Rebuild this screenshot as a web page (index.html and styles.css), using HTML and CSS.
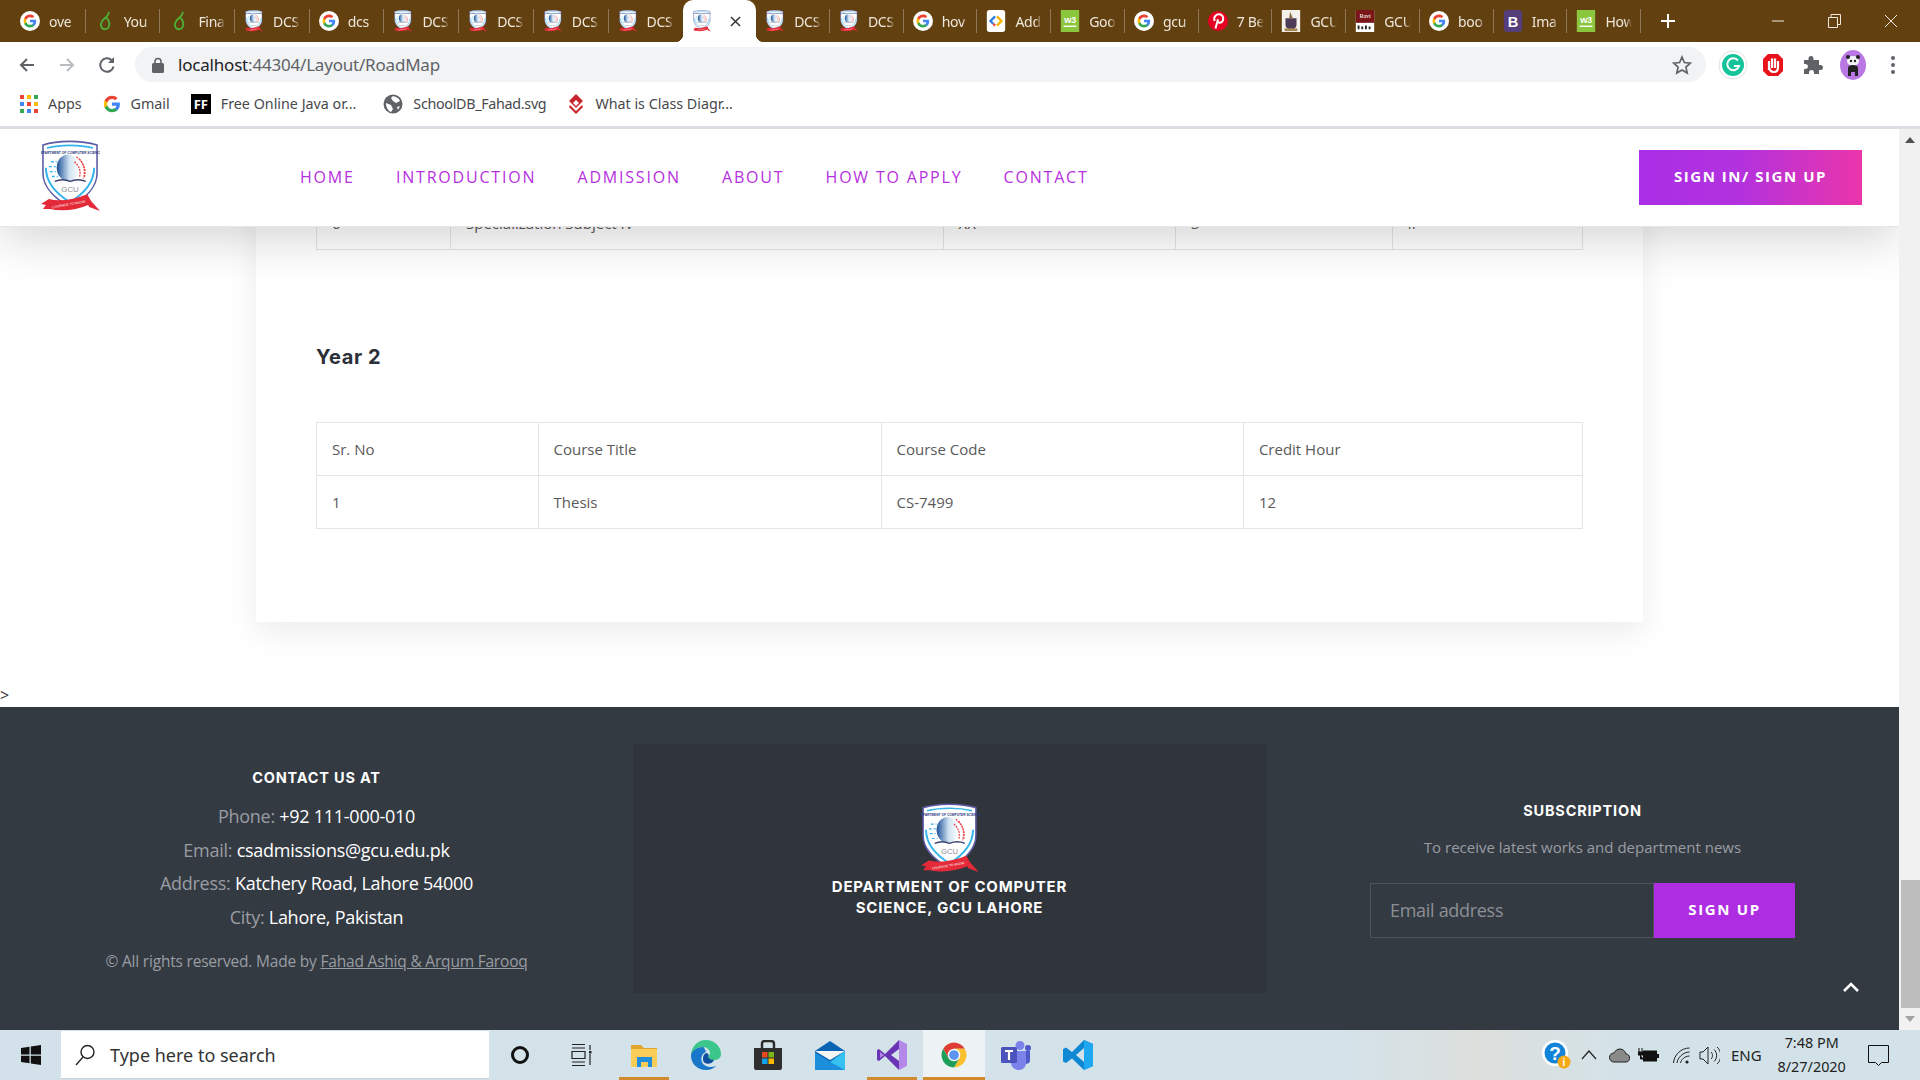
FILE: index.html
```html
<!DOCTYPE html>
<html lang="en">
<head>
    <meta charset="UTF-8">
    <title>RoadMap</title>
    <link rel="stylesheet" href="styles.css">
</head>
<body>
    <svg class="defs" width="0" height="0">
        <defs>
            <linearGradient id="globe" x1="0" x2="1" y1="0" y2="0">
                <stop offset="0" stop-color="#1c4f96"/>
                <stop offset="0.55" stop-color="#cfe3f2"/>
                <stop offset="1" stop-color="#ffffff"/>
            </linearGradient>
            <symbol id="google" viewBox="0 0 24 24">
                <circle cx="12" cy="12" r="12" fill="#fff"/>
                <g transform="translate(3.6 3.6) scale(.7)">
                    <path fill="#4285F4" d="M22.56 12.25c0-.78-.07-1.53-.2-2.25H12v4.26h5.92c-.26 1.37-1.04 2.53-2.21 3.31v2.77h3.57c2.08-1.92 3.28-4.74 3.28-8.09z"/>
                    <path fill="#34A853" d="M12 23c2.97 0 5.46-.98 7.28-2.66l-3.57-2.77c-.98.66-2.23 1.06-3.71 1.06-2.86 0-5.29-1.93-6.16-4.53H2.18v2.84C3.99 20.53 7.7 23 12 23z"/>
                    <path fill="#FBBC05" d="M5.84 14.09c-.22-.66-.35-1.36-.35-2.09s.13-1.43.35-2.09V7.07H2.18C1.43 8.55 1 10.22 1 12s.43 3.45 1.18 4.93l3.66-2.84z"/>
                    <path fill="#EA4335" d="M12 5.38c1.62 0 3.06.56 4.21 1.64l3.15-3.15C17.45 2.09 14.97 1 12 1 7.7 1 3.99 3.47 2.18 7.07l3.66 2.84c.87-2.6 3.3-4.53 6.16-4.53z"/>
                </g>
            </symbol>
            <symbol id="gmark" viewBox="0 0 24 24">
                <path fill="#4285F4" d="M22.56 12.25c0-.78-.07-1.53-.2-2.25H12v4.26h5.92c-.26 1.37-1.04 2.53-2.21 3.31v2.77h3.57c2.08-1.92 3.28-4.74 3.28-8.09z"/>
                <path fill="#34A853" d="M12 23c2.97 0 5.46-.98 7.28-2.66l-3.57-2.77c-.98.66-2.23 1.06-3.71 1.06-2.86 0-5.29-1.93-6.16-4.53H2.18v2.84C3.99 20.53 7.7 23 12 23z"/>
                <path fill="#FBBC05" d="M5.84 14.09c-.22-.66-.35-1.36-.35-2.09s.13-1.43.35-2.09V7.07H2.18C1.43 8.55 1 10.22 1 12s.43 3.45 1.18 4.93l3.66-2.84z"/>
                <path fill="#EA4335" d="M12 5.38c1.62 0 3.06.56 4.21 1.64l3.15-3.15C17.45 2.09 14.97 1 12 1 7.7 1 3.99 3.47 2.18 7.07l3.66 2.84c.87-2.6 3.3-4.53 6.16-4.53z"/>
            </symbol>
            <symbol id="leaf" viewBox="0 0 20 24">
                <path fill="none" stroke="#4caf38" stroke-width="2" d="M14 2C15 6 10 8 7 12c-3 4-1 9 3 9s6-5 4-9c-1-3-3-4-4-3"/>
            </symbol>
            <symbol id="crest" viewBox="0 0 60 74">
                <path fill="#fff" stroke="#5c5ca6" stroke-width="1.6" d="M2 5C17 0 41 0 57 5V34C57 48 44 60 29.5 68 15 60 2 48 2 34Z"/>
                <path fill="none" stroke="#35b4ec" stroke-width="1.6" d="M6 8C20 4.500 39 4.500 53 8"/>
                <path fill="none" stroke="#35b4ec" stroke-width="2" d="M5 28C5 44 18 56 29.5 63 41 56 54 44 54 28"/>
                <text x="29.5" y="14" text-anchor="middle" font-family="Liberation Sans" font-size="3.4" font-weight="700" fill="#2b3a80">DEPARTMENT OF COMPUTER SCIENCE</text>
                <ellipse cx="27.5" cy="28" rx="11.5" ry="13.5" fill="url(#globe)"/>
                <path fill="none" stroke="#ee3f45" stroke-width="1.3" stroke-dasharray="2 1" d="M36 17c7 5 10 13 7 22M39 19c5 6 7 12 5 19M34 22c5 4 7 10 5 16"/>
                <path fill="none" stroke="#35b4ec" stroke-width="1.3" stroke-dasharray="3 2" d="M10 22h6M8 27h7M9 32h6M11 37h6"/>
                <path fill="none" stroke="#3a4470" stroke-width="1.5" d="M14 42c5-2 11-2 15.5 0 5-2 11-2 16 0"/>
                <text x="29.5" y="53" text-anchor="middle" font-family="Liberation Sans" font-size="8" fill="#8d8d93">GCU</text>
                <path fill="#e42a38" d="M0 65L8 60C20 63 34 60 47 55L51 62 60 72 49 68 48 66C36 71 22 73 9 70L2 70 5 66Z"/>
                <text x="28" y="66.5" text-anchor="middle" transform="rotate(-10 28 65)" font-family="Liberation Sans" font-size="3.4" fill="#fff">COURAGE TO KNOW</text>
            </symbol>
            <symbol id="w3" viewBox="0 0 20 24">
                <rect width="20" height="24" fill="#8cc63f"/>
                <text x="10" y="14" text-anchor="middle" font-family="Liberation Sans" font-size="10" font-weight="700" fill="#fff">w3</text>
                <rect x="3" y="17" width="14" height="1.5" fill="#fff"/>
            </symbol>
        </defs>
    </svg>

    <div class="tabstrip">
        <div class="tabs">
            <div class="tab"><svg class="fav"><use href="#google"/></svg><span class="tab-label">ove</span></div>
            <div class="tab"><svg class="fav"><use href="#leaf"/></svg><span class="tab-label">You</span></div>
            <div class="tab"><svg class="fav"><use href="#leaf"/></svg><span class="tab-label">Fina</span></div>
            <div class="tab"><svg class="fav"><use href="#crest"/></svg><span class="tab-label">DCS</span></div>
            <div class="tab"><svg class="fav"><use href="#google"/></svg><span class="tab-label">dcs</span></div>
            <div class="tab"><svg class="fav"><use href="#crest"/></svg><span class="tab-label">DCS</span></div>
            <div class="tab"><svg class="fav"><use href="#crest"/></svg><span class="tab-label">DCS</span></div>
            <div class="tab"><svg class="fav"><use href="#crest"/></svg><span class="tab-label">DCS</span></div>
            <div class="tab tab-prev"><svg class="fav"><use href="#crest"/></svg><span class="tab-label">DCS</span></div>
            <div class="tab tab-active"><svg class="fav"><use href="#crest"/></svg>
                <svg class="tab-close" viewBox="0 0 12 12"><path d="M1 1l10 10M11 1L1 11" stroke="#333" stroke-width="1.6"/></svg>
            </div>
            <div class="tab"><svg class="fav"><use href="#crest"/></svg><span class="tab-label">DCS</span></div>
            <div class="tab"><svg class="fav"><use href="#crest"/></svg><span class="tab-label">DCS</span></div>
            <div class="tab"><svg class="fav"><use href="#google"/></svg><span class="tab-label">hov</span></div>
            <div class="tab"><svg class="fav" viewBox="0 0 20 24">
                <rect width="20" height="24" rx="3" fill="#fff"/>
                <path d="M9 7l-5 5 3 3" fill="none" stroke="#2a7de1" stroke-width="2.5"/>
                <path d="M11 7l5 5-5 5" fill="none" stroke="#f5b400" stroke-width="2.5"/>
                <path d="M7 15l2 2" stroke="#e8453c" stroke-width="2.5"/>
            </svg><span class="tab-label">Add</span></div>
            <div class="tab"><svg class="fav"><use href="#w3"/></svg><span class="tab-label">Goo</span></div>
            <div class="tab"><svg class="fav"><use href="#google"/></svg><span class="tab-label">gcu</span></div>
            <div class="tab"><svg class="fav" viewBox="0 0 24 24">
                <circle cx="12" cy="12" r="12" fill="#e60023"/>
                <path d="M9 21l3-11M8 12C6 7 10 4 13 4c4 0 6 3 5 7-1 3-4 4-6 2" fill="none" stroke="#fff" stroke-width="2.4"/>
            </svg><span class="tab-label">7 Be</span></div>
            <div class="tab"><svg class="fav" viewBox="0 0 20 24">
                <rect width="20" height="24" fill="#f4f1ea"/>
                <path d="M4 9h12v7c0 3-3 5-6 6-3-1-6-3-6-6z" fill="#4d3b58"/>
                <path d="M9 2l3 7H8z" fill="#8a6b3a"/>
                <rect x="3" y="20" width="14" height="3" fill="#a5884f"/>
            </svg><span class="tab-label">GCU</span></div>
            <div class="tab"><svg class="fav" viewBox="0 0 20 24">
                <rect width="20" height="24" fill="#fff"/>
                <rect width="20" height="14" fill="#7a1518"/>
                <text x="10" y="9" text-anchor="middle" font-family="Liberation Serif" font-size="7" fill="#fff">Ravi</text>
                <path d="M3 21v-4M7 21v-3M11 21v-4M15 21v-3" stroke="#222" stroke-width="2"/>
            </svg><span class="tab-label">GCU</span></div>
            <div class="tab"><svg class="fav"><use href="#google"/></svg><span class="tab-label">boo</span></div>
            <div class="tab"><svg class="fav" viewBox="0 0 20 24">
                <rect width="20" height="24" rx="4" fill="#563d7c"/>
                <text x="10" y="18" text-anchor="middle" font-family="Liberation Sans" font-size="16" font-weight="700" fill="#fff">B</text>
            </svg><span class="tab-label">Ima</span></div>
            <div class="tab"><svg class="fav"><use href="#w3"/></svg><span class="tab-label">How</span></div>
        </div>
        <svg class="new-tab" viewBox="0 0 14 14"><path d="M7 0v14M0 7h14" stroke="#fff" stroke-width="2"/></svg>
        <div class="win-controls">
            <div class="win-btn"><svg width="12" height="12"><path d="M0 6h12" stroke="#f0e8dc"/></svg></div>
            <div class="win-btn"><svg width="13" height="14"><path d="M.5 3.5h9v10h-9zM3 3.5v-3h9.5v10h-3" fill="none" stroke="#f0e8dc"/></svg></div>
            <div class="win-btn win-close"><svg width="14" height="14"><path d="M1 1l12 12M13 1L1 13" stroke="#f0e8dc"/></svg></div>
        </div>
    </div>

    <div class="toolbar">
        <div class="tool-btn"><svg width="18" height="18" viewBox="0 0 18 18"><path d="M16 9H3M9 3L3 9l6 6" fill="none" stroke="#5f6368" stroke-width="2"/></svg></div>
        <div class="tool-btn"><svg width="18" height="18" viewBox="0 0 18 18"><path d="M2 9h13M9 3l6 6-6 6" fill="none" stroke="#b9bcc0" stroke-width="2"/></svg></div>
        <div class="tool-btn"><svg width="18" height="18" viewBox="0 0 18 18"><path d="M15.5 10.5A6.7 6.7 0 1 1 13.7 4.3" fill="none" stroke="#5f6368" stroke-width="2"/><path d="M16 1v6h-6z" fill="#5f6368"/></svg></div>
        <div class="address">
            <svg class="lock" width="12" height="16" viewBox="0 0 12 16"><path d="M3 7V4.500a3 3 0 0 1 6 0V7" fill="none" stroke="#5f6368" stroke-width="1.6"/><rect y="6" width="12" height="10" rx="1.5" fill="#5f6368"/></svg>
            <span class="url"><span class="url-host">localhost</span>:44304/Layout/RoadMap</span>
            <svg class="star" width="20" height="20" viewBox="0 0 20 20"><path d="M10 2l2.400 5.500 6 .6-4.500 4 1.300 5.900L10 15l-5.200 3 1.300-5.900-4.500-4 6-.6z" fill="none" stroke="#5f6368" stroke-width="1.7"/></svg>
        </div>
        <div class="tool-btn"><svg width="30" height="30" viewBox="0 0 30 30">
            <circle cx="15" cy="15" r="14" fill="#fff" stroke="#e3e3e3"/>
            <circle cx="15" cy="15" r="11" fill="#15c39a"/>
            <path d="M20 10.500a6 6 0 1 0 1 5.500h-5" fill="none" stroke="#fff" stroke-width="2"/>
        </svg></div>
        <div class="tool-btn"><svg width="22" height="24" viewBox="0 0 22 24">
            <path d="M6 1h10l5 5v12l-5 5H6l-5-5V6z" fill="#e8141c"/>
            <path d="M7 17V8M10 15V5.500M13 15V5.500M16 15V8M7 13c0 4 2 6 5 6s4-2 4-5" fill="none" stroke="#fff" stroke-width="2.2"/>
        </svg></div>
        <div class="tool-btn"><svg width="20" height="20" viewBox="0 0 20 20"><path d="M8 1a2.500 2.500 0 0 1 2.500 2.500V5H16v5h1.500a2.500 2.500 0 0 1 0 5H16v4h-5v-1.500a2.500 2.500 0 0 0-5 0V19H1v-5h1.500a2.500 2.500 0 0 0 0-5H1V5h4.500V3.500A2.500 2.500 0 0 1 8 1z" fill="#5f6368"/></svg></div>
        <div class="tool-btn"><svg width="28" height="30" viewBox="0 0 28 30">
            <ellipse cx="14" cy="15" rx="13" ry="15" fill="#b977e4"/>
            <ellipse cx="14" cy="11" rx="6" ry="5" fill="#f3f3f3"/>
            <circle cx="9" cy="7" r="2" fill="#222"/><circle cx="19" cy="7" r="2" fill="#222"/>
            <circle cx="12" cy="11" r="1.2" fill="#222"/><circle cx="16" cy="11" r="1.2" fill="#222"/>
            <path d="M9 26v-8c0-2 2-3 5-3s5 1 5 3v8h-3v-4h-4v4z" fill="#222"/>
        </svg></div>
        <div class="tool-btn"><svg width="4" height="18" viewBox="0 0 4 18"><circle cx="2" cy="2" r="2" fill="#5f6368"/><circle cx="2" cy="9" r="2" fill="#5f6368"/><circle cx="2" cy="16" r="2" fill="#5f6368"/></svg></div>
    </div>

    <div class="bookmarks">
        <div class="bookmark"><svg width="18" height="18" viewBox="0 0 18 18">
            <rect width="4" height="4" fill="#ea4335"/><rect x="7" width="4" height="4" fill="#fbbc05"/><rect x="14" width="4" height="4" fill="#34a853"/>
            <rect y="7" width="4" height="4" fill="#4285f4"/><rect x="7" y="7" width="4" height="4" fill="#ea4335"/><rect x="14" y="7" width="4" height="4" fill="#fbbc05"/>
            <rect y="14" width="4" height="4" fill="#34a853"/><rect x="7" y="14" width="4" height="4" fill="#4285f4"/><rect x="14" y="14" width="4" height="4" fill="#ea4335"/>
        </svg>Apps</div>
        <div class="bookmark"><svg width="18" height="18"><use href="#gmark"/></svg>Gmail</div>
        <div class="bookmark"><span class="ff-icon">FF</span>Free Online Java or...</div>
        <div class="bookmark bookmark-file"><svg width="20" height="20" viewBox="0 0 20 20">
            <circle cx="10" cy="10" r="9.5" fill="#5f6368"/>
            <path d="M10 2c3 1 6 2 7 5l-4 2-3-2-2-3zM3 9l5 2 2 4-2 3c-3-1-5-5-5-9zM14 13l3-1-2 4z" fill="#fff"/>
        </svg>SchoolDB_Fahad.svg</div>
        <div class="bookmark"><svg width="18" height="20" viewBox="0 0 18 20">
            <path d="M9 0l7 7-7 7-7-7z" fill="#c8262c"/><path d="M9 6l3 3-3 3-3-3z" fill="#fff"/><path d="M3 11l6 6 6-6 1 2-7 7-7-7z" fill="#c8262c"/>
        </svg>What is Class Diagr...</div>
    </div>

    <div class="viewport">
        <div class="page">
            <header class="site-nav">
                <svg class="nav-logo"><use href="#crest"/></svg>
                <nav class="menu">
                    <a>HOME</a>
                    <a>INTRODUCTION</a>
                    <a>ADMISSION</a>
                    <a>ABOUT</a>
                    <a>HOW TO APPLY</a>
                    <a>CONTACT</a>
                </nav>
                <a class="btn-sign">SIGN IN/ SIGN UP</a>
            </header>

            <main class="main">
                <div class="card">
                    <table class="course-table">
                        <colgroup>
                            <col class="c-a1"><col class="c-a2"><col class="c-a3"><col class="c-a4"><col>
                        </colgroup>
                        <tr><td>6</td><td>Specialization Subject IV</td><td>XX</td><td>3</td><td>II</td></tr>
                    </table>
                    <h3 class="year-title">Year 2</h3>
                    <table class="course-table">
                        <colgroup>
                            <col class="c-b1"><col class="c-b2"><col class="c-b3"><col>
                        </colgroup>
                        <tr><td>Sr. No</td><td>Course Title</td><td>Course Code</td><td>Credit Hour</td></tr>
                        <tr><td>1</td><td>Thesis</td><td>CS-7499</td><td>12</td></tr>
                    </table>
                </div>
                <div class="stray">&gt;</div>
            </main>

            <footer class="footer">
                <div class="f-col f-contact">
                    <h5 class="f-title">CONTACT US AT</h5>
                    <p class="f-line">Phone: <span>+92 111-000-010</span></p>
                    <p class="f-line">Email: <span>csadmissions@gcu.edu.pk</span></p>
                    <p class="f-line">Address: <span>Katchery Road, Lahore 54000</span></p>
                    <p class="f-line">City: <span>Lahore, Pakistan</span></p>
                    <p class="f-copy">© All rights reserved. Made by <a>Fahad Ashiq &amp; Arqum Farooq</a></p>
                </div>
                <div class="f-col f-brand">
                    <svg class="f-logo"><use href="#crest"/></svg>
                    <h5 class="f-brand-name">DEPARTMENT OF COMPUTER<br>SCIENCE, GCU LAHORE</h5>
                </div>
                <div class="f-col f-sub">
                    <h5 class="f-title">SUBSCRIPTION</h5>
                    <p class="f-note">To receive latest works and department news</p>
                    <div class="sub-form">
                        <div class="sub-input">Email address</div>
                        <div class="sub-btn">SIGN UP</div>
                    </div>
                </div>
                <svg class="to-top" width="18" height="11" viewBox="0 0 18 11"><path d="M2 9l7-7 7 7" fill="none" stroke="#fff" stroke-width="2.6"/></svg>
            </footer>
        </div>
        <div class="scrollbar">
            <svg class="sb-arrow" width="10" height="6" viewBox="0 0 10 6"><path d="M5 0l5 6H0z" fill="#505050"/></svg>
            <div class="sb-track"><div class="sb-thumb"></div></div>
            <svg class="sb-arrow" width="10" height="6" viewBox="0 0 10 6"><path d="M0 0h10L5 6z" fill="#a3a3a3"/></svg>
        </div>
    </div>

    <div class="taskbar">
        <div class="start"><svg width="20" height="20" viewBox="0 0 20 20"><path d="M0 3l8.500-1.300v7.800H0zM9.800 1.500L20 0v9.500H9.800zM0 10.800h8.500v7.500L0 17zM9.800 10.800H20V20L9.800 18.500z" fill="#111"/></svg></div>
        <div class="search">
            <svg width="20" height="22" viewBox="0 0 20 22"><circle cx="12.5" cy="8" r="6.5" fill="none" stroke="#222" stroke-width="1.4"/><path d="M8 13l-7 8" stroke="#222" stroke-width="1.4"/></svg>
            <span>Type here to search</span>
        </div>
        <div class="task-item"><svg width="20" height="20"><circle cx="10" cy="10" r="7.5" fill="none" stroke="#111" stroke-width="3"/></svg></div>
        <div class="task-item"><svg width="22" height="22" viewBox="0 0 22 22"><path d="M1 .5h13M1 4h13M1 7.500h13v7H1zM1 18h13M1 21.500h13M19 1v5M19 10v11" fill="none" stroke="#222" stroke-width="1.2"/><rect x="18" y="7" width="2.5" height="2.5" fill="#222"/></svg></div>
        <div class="task-item task-running"><svg width="30" height="30" viewBox="0 0 30 30">
            <path d="M2 5h10l3 3h13v4H2z" fill="#e2a52c"/>
            <path d="M2 9h26v18H2z" fill="#f9cd58"/>
            <path d="M8 17h15v10H8z" fill="#1f8fdc"/><path d="M12 22h7v5h-7z" fill="#f9cd58"/>
        </svg></div>
        <div class="task-item"><svg width="30" height="30" viewBox="0 0 30 30">
            <path d="M15 0c8 0 15 6 15 14 0 4-3 6-7 6-3 0-6-1-6-3 0-1 2-2 2-4 0-3-3-6-7-6C6 7 1 11 0 16 0 7 6 0 15 0z" fill="#3bc68c"/>
            <path d="M12 7c-6 0-12 4-12 9 0 8 7 14 15 14 5 0 8-2 10-4-5 2-12 1-14-4s1-9 4-10c-1-3-2-5-3-5z" fill="#1976c8"/>
            <path d="M12 18c0-3 2-5 4-5 2 1 2 3 1 4 1 2 4 3 6 3-1 3-6 5-9 3-2-1-2-3-2-5z" fill="#0f4f9e"/>
        </svg></div>
        <div class="task-item"><svg width="30" height="30" viewBox="0 0 30 30">
            <path d="M9 8V4c0-2 1-3 3-3h6c2 0 3 1 3 3v4" fill="none" stroke="#2b2b2b" stroke-width="2.4"/>
            <path d="M1 8h28v20a2 2 0 0 1-2 2H3a2 2 0 0 1-2-2z" fill="#2f2f2f"/>
            <rect x="9" y="12" width="5.5" height="5.5" fill="#e8491d"/><rect x="15.5" y="12" width="5.5" height="5.5" fill="#7cb518"/>
            <rect x="9" y="18.5" width="5.5" height="5.5" fill="#0ca3e8"/><rect x="15.5" y="18.5" width="5.5" height="5.5" fill="#fdb900"/>
        </svg></div>
        <div class="task-item"><svg width="30" height="30" viewBox="0 0 30 30">
            <path d="M15 1L0 11v19h30V11z" fill="#0a64b4"/>
            <path d="M0 11h30L15 20z" fill="#f5f5f5"/>
            <path d="M30 11v19H0L0 13l15 9z" fill="#35c2f2"/>
            <path d="M0 13v17h30L15 22z" fill="#1c8fdc"/>
        </svg></div>
        <div class="task-item task-running"><svg width="30" height="30" viewBox="0 0 30 30">
            <path d="M22 0l8 4v22l-8 4z" fill="#b388e8"/>
            <path d="M22 0L8 14 2 9 0 10v10l2 1 6-5 14 14V21l-8-6 8-6z" fill="#6a35b5"/>
            <path d="M3 12l4 3-4 3z" fill="#b388e8"/>
        </svg></div>
        <div class="task-item task-active"><svg width="30" height="30" viewBox="0 0 24 24">
            <path fill="#dd3d33" d="M3.34 7A10 10 0 0 1 20.66 7H12L7.67 14.5Z"/>
            <path fill="#fbc02d" d="M20.66 7A10 10 0 0 1 12 22L16.33 14.5 12 7Z"/>
            <path fill="#1e9e58" d="M12 22A10 10 0 0 1 3.34 7L7.67 14.5H16.33Z"/>
            <circle cx="12" cy="12" r="5" fill="#fff"/><circle cx="12" cy="12" r="3.9" fill="#5c94f0"/>
        </svg></div>
        <div class="task-item"><svg width="30" height="30" viewBox="0 0 30 30">
            <circle cx="19" cy="5.5" r="4.5" fill="#7b83eb"/><circle cx="27" cy="8" r="3" fill="#5059c9"/>
            <path d="M23 11h6v9c0 3-2 4-6 4z" fill="#5059c9"/>
            <path d="M10 11h15v12c0 4-3 7-7 7s-8-3-8-7z" fill="#7b83eb"/>
            <rect y="7" width="16" height="16" rx="1.5" fill="#4b53bc"/>
            <path d="M4 11h8M8 11v9" stroke="#fff" stroke-width="2.2"/>
        </svg></div>
        <div class="task-item"><svg width="30" height="30" viewBox="0 0 30 30">
            <path d="M21 0l9 4v22l-9 4-12-11.500-6 4.500-3-1.500V9l3-1.500 6 4.500z" fill="#0f88d3"/>
            <path d="M21 8l-8 7 8 7z" fill="#d3e2ea"/>
            <path d="M21 0l9 4v22l-9 4z" fill="#1fa8f1"/>
        </svg></div>
        <div class="tray">
            <svg class="tray-help" width="30" height="30" viewBox="0 0 30 30">
                <circle cx="13" cy="13" r="13" fill="#fff"/><circle cx="13" cy="13" r="10.5" fill="#1284d8"/>
                <text x="13" y="20" text-anchor="middle" font-family="Liberation Sans" font-size="19" font-weight="700" fill="#fff">?</text>
                <circle cx="22" cy="22" r="6.5" fill="#f5a915"/>
                <text x="22" y="26" text-anchor="middle" font-family="Liberation Sans" font-size="10" font-weight="700" fill="#fff">i</text>
            </svg>
            <svg class="tray-chev" width="16" height="10" viewBox="0 0 16 10"><path d="M1 9l7-8 7 8" fill="none" stroke="#222" stroke-width="1.2"/></svg>
            <svg class="tray-cloud" width="21" height="15" viewBox="0 0 21 15"><path d="M5 14h11a4 4 0 0 0 1-8c-1-3-3-5-6-5-3 0-5 2-6 4a4.500 4.500 0 0 0 0 9z" fill="#8a8a8a" stroke="#222"/></svg>
            <svg class="tray-batt" width="21" height="15" viewBox="0 0 21 15"><path d="M1 0v4M4 0v4M0 4h5v3H0zM2.500 7v4h3" fill="#111" stroke="#111"/><rect x="5.5" y="3" width="13" height="10" fill="#111" stroke="#111"/><rect x="19" y="6" width="2" height="4" fill="#111"/></svg>
            <svg class="tray-wifi" width="17" height="17" viewBox="0 0 17 17"><path d="M.5 16C1 8 8 1 16.500 1M4 16c.5-5 6-11 12.500-11M7.500 16c.500-3 4-7 9-7" fill="none" stroke="#222" stroke-width="1"/><circle cx="14" cy="15" r="1.6" fill="#222"/></svg>
            <svg class="tray-vol" width="21" height="19" viewBox="0 0 21 19"><path d="M1 6h3l5-5v17l-5-5H1z" fill="none" stroke="#222"/><path d="M12 6c2 2 2 5 0 7M15 3.500c3.500 3 3.500 9 0 12M18 1c5 4 5 13 0 17" fill="none" stroke="#222"/></svg>
            <span class="tray-lang">ENG</span>
            <div class="clock"><span>7:48 PM</span><span>8/27/2020</span></div>
            <svg class="tray-note" width="21" height="21" viewBox="0 0 21 21"><path d="M.5.500h20v17h-7l-3 3-3-3h-7z" fill="none" stroke="#111"/></svg>
        </div>
    </div>
</body>
</html>
```

FILE: styles.css
```css
* {
    box-sizing: border-box;
}

html, body {
    margin: 0;
    height: 100%;
}

body {
    width: 1920px;
    height: 1080px;
    overflow: hidden;
    display: flex;
    flex-direction: column;
    background-color: #fff;
    font-family: 'Open Sans', sans-serif;
}

.defs {
    position: absolute;
}

/* browser tabs */
.tabstrip {
    height: 42px;
    flex-shrink: 0;
    display: flex;
    align-items: center;
    padding-left: 11px;
    background-color: #624010;
}

.tabs {
    display: flex;
    width: 1630px;
}

.tab {
    width: 74.7px;
    height: 42px;
    flex-shrink: 0;
    display: flex;
    align-items: center;
    padding-left: 9px;
    position: relative;
    color: #eee7db;
    font-family: 'Noto Sans', sans-serif;
    font-size: 14px;
    letter-spacing: -0.3px;
}

.tab::after {
    content: "";
    position: absolute;
    right: 0;
    top: 9px;
    width: 1px;
    height: 24px;
    background-color: #90775a;
}

.tab-prev::after {
    display: none;
}

.tab-active {
    width: 73px;
    background-color: #fff;
    border-radius: 10px 10px 0 0;
    color: #333;
}

.tab-active::before, .tab-active::after {
    content: "";
    position: absolute;
    top: auto;
    bottom: 0;
    width: 8px;
    height: 8px;
}

.tab-active::before {
    left: -8px;
    background: radial-gradient(circle at 0 0, #624010 8px, #fff 8.5px);
}

.tab-active::after {
    right: -8px;
    background: radial-gradient(circle at 100% 0, #624010 8px, #fff 8.5px);
}

.tab-active ~ .tab {
    width: 73.75px;
}

.tab-close {
    width: 11px;
    height: 11px;
    margin-left: 18px;
}

.fav {
    width: 20px;
    height: 22px;
    flex-shrink: 0;
}

.tab-label {
    width: 27px;
    margin-left: 9px;
    overflow: hidden;
    white-space: nowrap;
    -webkit-mask-image: linear-gradient(to right, #000 75%, transparent);
    mask-image: linear-gradient(to right, #000 75%, transparent);
}

.new-tab {
    width: 14px;
    height: 14px;
    margin-left: 20px;
}

.win-controls {
    display: flex;
    margin-left: auto;
}

.win-btn {
    width: 56px;
    height: 42px;
    display: flex;
    align-items: center;
    justify-content: center;
}

.win-close {
    width: 58px;
}

/* address bar */
.toolbar {
    height: 47px;
    flex-shrink: 0;
    display: flex;
    align-items: center;
    padding: 0 7px 2px;
}

.tool-btn {
    width: 40px;
    height: 40px;
    display: flex;
    align-items: center;
    justify-content: center;
    flex-shrink: 0;
}

.address {
    flex: 1;
    height: 35px;
    margin: 0 7px 0 8px;
    padding: 0 14px 0 17px;
    display: flex;
    align-items: center;
    border-radius: 18px;
    background-color: #f1f3f4;
}

.url {
    margin-left: 14px;
    font-family: 'Noto Sans', sans-serif;
    font-size: 17px;
    color: #5f6368;
    letter-spacing: -0.2px;
}

.url-host {
    color: #202124;
}

.star {
    margin-left: auto;
}

.bookmarks {
    height: 40px;
    flex-shrink: 0;
    display: flex;
    align-items: center;
    gap: 21px;
    padding: 0 0 8px 20px;
    border-bottom: 3px solid #dedde6;
}

.bookmark {
    display: flex;
    align-items: center;
    gap: 10px;
    font-family: 'Noto Sans', sans-serif;
    font-size: 14.3px;
    color: #48494b;
}

.bookmark-file {
    margin-left: 6px;
    letter-spacing: -0.3px;
}

.ff-icon {
    width: 20px;
    height: 20px;
    background-color: #000;
    color: #fff;
    font-size: 13px;
    font-weight: 700;
    line-height: 20px;
    text-align: center;
}

/* page */
.viewport {
    flex: 1;
    min-height: 0;
    display: flex;
}

.page {
    flex: 1;
    min-width: 0;
    display: flex;
    flex-direction: column;
    overflow: hidden;
}

.site-nav {
    height: 98px;
    flex-shrink: 0;
    position: relative;
    z-index: 2;
    display: flex;
    align-items: center;
    padding: 0 37px 0 41px;
    background-color: #fff;
    border-bottom: 1px solid #e6e6e6;
    box-shadow: 0 10px 50px rgba(0, 0, 0, 0.18);
}

.nav-logo {
    width: 59px;
    height: 73px;
    margin-bottom: 3px;
}

.menu {
    display: flex;
    gap: 41.2px;
    margin-left: 200px;
    margin-bottom: 2px;
}

.menu a {
    color: #b62fe0;
    font-size: 16px;
    letter-spacing: 1.8px;
}

.btn-sign {
    width: 223px;
    height: 55px;
    margin-left: auto;
    background: linear-gradient(to right, #aa2ee6, #b232de 45%, #eb35aa);
    color: #fff;
    font-size: 15px;
    font-weight: 700;
    letter-spacing: 1.55px;
    line-height: 53px;
    text-align: center;
}

.main {
    flex: 1;
    min-height: 0;
}

.card {
    margin: -40px 256px 0;
    padding: 9px 60px 93px;
    background-color: #fff;
    box-shadow: 0 10px 30px rgba(0, 0, 0, 0.08);
}

.course-table {
    width: 100%;
    table-layout: fixed;
    border-collapse: collapse;
    color: #5a5a5a;
    font-size: 15px;
}

.course-table td {
    height: 53px;
    padding: 0 15px;
    border: 1px solid #e5e5e5;
}

.c-a1 { width: 134px; }
.c-a2 { width: 492.5px; }
.c-a3 { width: 232.5px; }
.c-a4 { width: 216.5px; }
.c-b1 { width: 221.5px; }
.c-b2 { width: 343px; }
.c-b3 { width: 362.4px; }

.year-title {
    margin: 95px 0 53px;
    color: #2b3038;
    font-family: 'Inter', sans-serif;
    font-size: 20px;
    font-weight: 700;
    letter-spacing: 0.6px;
    line-height: 24px;
}

.stray {
    margin-top: 61px;
    color: #333;
    font-size: 16px;
    line-height: 25px;
}

/* footer */
.footer {
    height: 323px;
    flex-shrink: 0;
    position: relative;
    display: grid;
    grid-template-columns: 633px 633px 633px;
    padding: 37px 0 37px;
    background-color: #343a42;
    color: #999da2;
    text-align: center;
}

.f-col {
    min-width: 0;
}

.f-title {
    margin: 0;
    color: #fff;
    font-family: 'Inter', sans-serif;
    font-size: 14.5px;
    font-weight: 700;
    letter-spacing: 0.8px;
    line-height: 20px;
}

.f-contact {
    padding-top: 24px;
}

.f-contact .f-title {
    margin-bottom: 12px;
}

.f-line {
    margin: 0;
    font-size: 18px;
    line-height: 33.6px;
    letter-spacing: -0.27px;
}

.f-line span {
    color: #fff;
}

.f-copy {
    margin: 15px 0 0;
    font-size: 15.5px;
    line-height: 24px;
    letter-spacing: -0.2px;
}

.f-copy a {
    text-decoration: underline;
}

.f-brand {
    padding-top: 59px;
    background-color: #30353c;
}

.f-logo {
    display: block;
    width: 60px;
    height: 71px;
    margin: 0 auto;
}

.f-brand-name {
    margin: 2px 0 0;
    color: #fff;
    font-family: 'Inter', sans-serif;
    font-size: 15px;
    font-weight: 700;
    letter-spacing: 0.8px;
    line-height: 21px;
}

.f-sub {
    padding-top: 57px;
}

.f-note {
    margin: 14px 0 0;
    font-size: 15px;
    line-height: 24px;
}

.sub-form {
    display: flex;
    width: 425px;
    height: 55px;
    margin: 24px auto 0;
}

.sub-input {
    width: 284px;
    padding-left: 19px;
    border: 1px solid #4e545c;
    color: #8b9096;
    font-size: 18px;
    letter-spacing: -0.3px;
    line-height: 53px;
    text-align: left;
}

.sub-btn {
    flex: 1;
    background-color: #ae2de2;
    color: #fff;
    font-size: 15px;
    font-weight: 700;
    letter-spacing: 1.65px;
    line-height: 53px;
}

.to-top {
    position: absolute;
    right: 39px;
    bottom: 37px;
}

.scrollbar {
    width: 21px;
    flex-shrink: 0;
    display: flex;
    flex-direction: column;
    align-items: center;
    background-color: #f1f1f1;
}

.sb-arrow {
    flex-shrink: 0;
    margin: 8px 0;
}

.sb-track {
    flex: 1;
    width: 100%;
    display: flex;
    align-items: flex-end;
}

.sb-thumb {
    width: 19px;
    height: 128px;
    margin-left: 2px;
    background-color: #bdbdbd;
}

/* windows taskbar */
.taskbar {
    height: 50px;
    flex-shrink: 0;
    display: flex;
    align-items: center;
    background: linear-gradient(to right, #d3e2ea, #d4e2e9 70%, #dcdfdc 77%, #d3e2e9 85%);
}

.start {
    width: 61px;
    display: flex;
    justify-content: center;
}

.search {
    width: 428px;
    height: 48px;
    display: flex;
    align-items: center;
    gap: 15px;
    padding-left: 14px;
    background-color: #fff;
    border-bottom: 1px solid #c7d0d5;
    color: #333;
    font-family: 'Noto Sans', sans-serif;
    font-size: 18px;
}

.task-item {
    width: 62px;
    height: 50px;
    position: relative;
    display: flex;
    align-items: center;
    justify-content: center;
}

.task-running::after {
    content: "";
    position: absolute;
    left: 6px;
    right: 6px;
    bottom: 0;
    height: 3px;
    background-color: #d18b2c;
}

.task-active {
    background-color: #edf3f5;
}

.task-active::after {
    content: "";
    position: absolute;
    left: 0;
    right: 0;
    bottom: 0;
    height: 3px;
    background-color: #d18b2c;
}

.tray {
    flex: 1;
    display: flex;
    align-items: center;
    height: 50px;
    color: #222;
    font-family: 'Noto Sans', sans-serif;
    font-size: 15px;
}

.tray-help { margin-left: 433px; }
.tray-chev { margin-left: 9px; }
.tray-cloud { margin-left: 12px; }
.tray-batt { margin-left: 8px; }
.tray-wifi { margin-left: 14px; }
.tray-vol { margin-left: 9px; }
.tray-lang { margin-left: 11px; }

.clock {
    display: flex;
    flex-direction: column;
    align-items: center;
    width: 80px;
    margin-left: 10px;
    font-size: 14.4px;
    line-height: 24px;
}

.tray-note {
    margin-left: 16px;
}
```
